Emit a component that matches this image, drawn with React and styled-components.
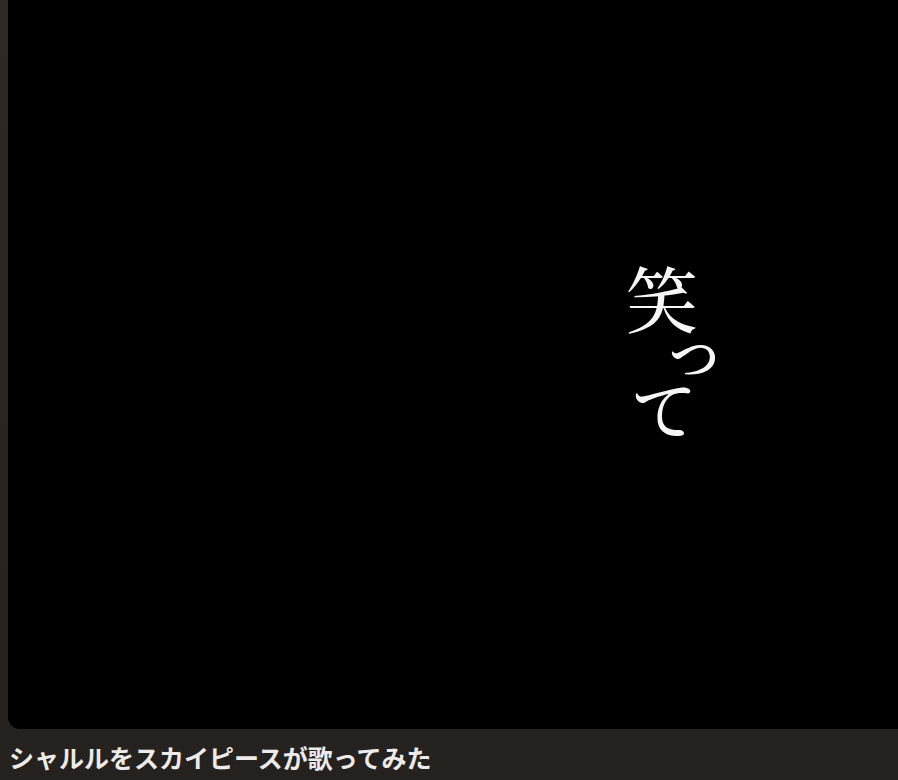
import React from 'react';
import styled, { createGlobalStyle } from 'styled-components';

const GlobalStyle = createGlobalStyle`
  html, body {
    margin: 0;
    padding: 0;
    background: #262420;
  }
  body {
    font-family: "Noto Sans CJK JP", "Noto Sans", sans-serif;
  }
`;

const Page = styled.div`
  width: 898px;
  height: 780px;
  overflow: hidden;
  background: linear-gradient(180deg, #2c2a27 0%, #24211e 100%);
  padding-left: 8px;
  box-sizing: border-box;
  display: flex;
  flex-direction: column;
`;

const Player = styled.div`
  position: relative;
  height: 729px;
  flex-shrink: 0;
  background: #000;
  border-bottom-left-radius: 12px;
`;

// subtitle burned into the video frame
const Caption = styled.div`
  position: absolute;
  left: 609px;
  top: 260px;
  width: 90px;
  display: flex;
  flex-direction: column;
  align-items: center;
  color: #f6f6f6;
  font-family: "Noto Serif CJK JP", "Noto Sans CJK JP", serif;
  font-weight: 500;
  line-height: 1;
`;

const Glyph = styled.span`
  display: block;
  font-size: ${p => p.size || 72}px;
  height: ${p => p.size || 72}px;
  margin-left: ${p => p.shift || 0}px;
  margin-top: ${p => p.gap || 0}px;
`;

const Title = styled.h1`
  margin: 13px 0 0 1px;
  font-size: 25px;
  font-weight: 700;
  color: #ecebea;
  line-height: 1.2;
  letter-spacing: 0;
  white-space: nowrap;
`;

export default function App() {
  return (
    <>
      <GlobalStyle />
      <Page>
        <Player>
          <Caption>
            <Glyph>笑</Glyph>
            <Glyph size={66} shift={64} gap={-18}>っ</Glyph>
            <Glyph size={66} shift={4} gap={-6}>て</Glyph>
          </Caption>
        </Player>
        <Title>シャルルをスカイピースが歌ってみた</Title>
      </Page>
    </>
  );
}
